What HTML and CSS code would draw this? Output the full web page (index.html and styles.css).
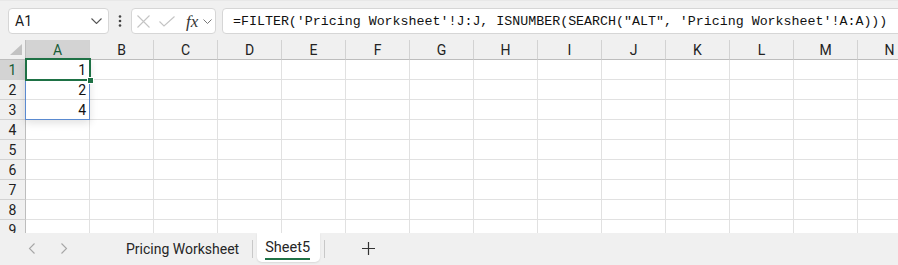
FILE: index.html
```html
<!DOCTYPE html>
<html lang="en">
<head>
  <meta charset="UTF-8">
  <title>Sheet5</title>
  <link rel="stylesheet" href="styles.css">
</head>
<body>

<div class="app">
  <div class="formulaRow">
    <div class="nameBox">
      <span>A1</span>
      <svg class="chev" width="11" height="6" viewBox="0 0 11 6"><path d="M0.5 0.5 L5.5 5.5 L10.5 0.5" fill="none" stroke="#555" stroke-width="1.1"/></svg>
    </div>
    <div class="grip">
      <svg width="4" height="12" viewBox="0 0 4 12"><circle cx="2" cy="1.5" r="1.3" fill="#444"/><circle cx="2" cy="6" r="1.3" fill="#444"/><circle cx="2" cy="10.5" r="1.3" fill="#444"/></svg>
    </div>
    <div class="fxBox">
      <svg class="cancel" width="13" height="13" viewBox="0 0 13 13"><path d="M0.5 0.5 L12.5 12.5 M12.5 0.5 L0.5 12.5" stroke="#c4c4c4" stroke-width="1.1"/></svg>
      <svg class="enter" width="16" height="11" viewBox="0 0 16 11"><path d="M0.5 5.5 L5 10 L15.5 0.5" fill="none" stroke="#c4c4c4" stroke-width="1.1"/></svg>
      <span class="fx">fx</span>
      <svg class="chev" width="9" height="5" viewBox="0 0 9 5"><path d="M0.5 0.5 L4.5 4.5 L8.5 0.5" fill="none" stroke="#777" stroke-width="1"/></svg>
    </div>
    <div class="formula">=FILTER('Pricing Worksheet'!J:J, ISNUMBER(SEARCH("ALT", 'Pricing Worksheet'!A:A)))</div>
  </div>

  <div class="sheet">
    <div id="grid" class="grid"></div>
    <div class="spill"></div>
    <div class="active"><span class="handle"></span></div>
  </div>

  <div class="tabs">
    <div class="nav">
      <svg width="8" height="11" viewBox="0 0 8 11"><path d="M6.5 0.5 L1.5 5.5 L6.5 10.5" fill="none" stroke="#a6a6a6" stroke-width="1.1"/></svg>
      <svg width="8" height="11" viewBox="0 0 8 11"><path d="M1.5 0.5 L6.5 5.5 L1.5 10.5" fill="none" stroke="#a6a6a6" stroke-width="1.1"/></svg>
    </div>
    <div class="tab">Pricing Worksheet</div>
    <span class="sep"></span>
    <div class="tab current"><span>Sheet5</span></div>
    <span class="sep"></span>
    <div class="addSheet">
      <svg width="13" height="13" viewBox="0 0 13 13"><path d="M6.5 0 V13 M0 6.5 H13" stroke="#333" stroke-width="1.2"/></svg>
    </div>
  </div>
</div>

<script>
  var grid = document.getElementById('grid');
  var cols = 'ABCDEFGHIJKLMN'.split('');
  var values = { 1: '1', 2: '2', 3: '4' };

  var corner = document.createElement('div');
  corner.className = 'corner';
  grid.appendChild(corner);

  for (var c = 0; c < cols.length; c++) {
    var head = document.createElement('div');
    head.className = 'colHead' + (c === 0 ? ' sel' : '');
    head.textContent = cols[c];
    grid.appendChild(head);
  }

  for (var r = 1; r <= 9; r++) {
    var rowHead = document.createElement('div');
    rowHead.className = 'rowHead' + (r === 1 ? ' sel' : '');
    rowHead.textContent = r;
    grid.appendChild(rowHead);
    for (var k = 0; k < cols.length; k++) {
      var cell = document.createElement('div');
      cell.className = 'cell';
      if (k === 0 && values[r]) {
        cell.textContent = values[r];
      }
      grid.appendChild(cell);
    }
  }
</script>
</body>
</html>
```

FILE: styles.css
```css
*, *:before, *:after {
  box-sizing: border-box;
}

body {
  margin: 0;
  padding: 0;
  overflow: hidden;
  background: #f0f0f0;
  font-family: Roboto, "Noto Sans", sans-serif;
  color: #222;
}

.app {
  width: 898px;
  height: 265px;
  display: flex;
  flex-direction: column;
  overflow: hidden;
}

/* formula bar */

.formulaRow {
  height: 40px;
  flex: none;
  display: flex;
  align-items: flex-start;
  padding: 7px 0 0 8px;
  background: #f0f0f0;
  border-top: 1px solid #e8e8e8;
}

.nameBox {
  width: 101px;
  height: 26px;
  display: flex;
  align-items: center;
  justify-content: space-between;
  padding: 0 6px 0 6px;
  background: #fff;
  border: 1px solid #d6d6d6;
  border-radius: 4px;
  font-size: 14px;
  color: #1a1a1a;
}

.grip {
  width: 22px;
  height: 26px;
  display: flex;
  align-items: center;
  justify-content: center;
}

.fxBox {
  width: 85px;
  height: 26px;
  display: flex;
  align-items: center;
  padding-left: 5px;
  background: #fff;
  border: 1px solid #d6d6d6;
  border-radius: 4px;
}

.fxBox .enter {
  margin-left: 9px;
}

.fx {
  margin-left: 11px;
  font-family: "Liberation Serif", serif;
  font-style: italic;
  font-size: 17px;
  color: #333;
  line-height: 1;
}

.fxBox .chev {
  margin-left: 5px;
}

.formula {
  flex: 1;
  height: 26px;
  margin: 0 -10px 0 6px;
  padding: 0 0 0 10px;
  display: flex;
  align-items: center;
  background: #fff;
  border: 1px solid #d6d6d6;
  border-radius: 4px;
  font-family: "Liberation Mono", monospace;
  font-size: 13.3px;
  color: #111;
  white-space: nowrap;
}

/* grid */

.sheet {
  position: relative;
  height: 193px;
  flex: none;
  overflow: hidden;
  background: #fff;
}

.grid {
  display: grid;
  grid-template-columns: 26px repeat(14, 64px);
  grid-auto-rows: 20px;
  font-size: 14px;
}

.corner {
  position: relative;
  background: #f0f0f0;
  border-right: 1px solid #bdbdbd;
  border-bottom: 1px solid #bdbdbd;
}

.corner:after {
  content: "";
  position: absolute;
  right: 3px;
  bottom: 4px;
  width: 0;
  height: 0;
  border-left: 12px solid transparent;
  border-bottom: 11px solid #c2c2c2;
}

.colHead {
  display: flex;
  align-items: center;
  justify-content: center;
  background: #f0f0f0;
  border-right: 1px solid #d2d2d2;
  border-bottom: 1px solid #bdbdbd;
  color: #222;
}

.rowHead {
  display: flex;
  align-items: center;
  justify-content: center;
  background: #f0f0f0;
  border-right: 1px solid #bdbdbd;
  border-bottom: 1px solid #d2d2d2;
  color: #222;
}

.colHead.sel, .rowHead.sel {
  background: #d3d3d3;
  color: #185c37;
}

.cell {
  display: flex;
  align-items: center;
  justify-content: flex-end;
  padding-right: 3px;
  border-right: 1px solid #e1e1e1;
  border-bottom: 1px solid #e1e1e1;
  color: #111;
}

.spill {
  position: absolute;
  left: 25px;
  top: 19px;
  width: 65px;
  height: 61px;
  border: 1px solid #5a8ad0;
  box-shadow: 0 3px 8px rgba(0, 0, 0, 0.12);
}

.active {
  position: absolute;
  left: 25px;
  top: 18px;
  width: 66px;
  height: 23px;
  border: 2px solid #1e7145;
}

.handle {
  position: absolute;
  right: -5px;
  bottom: -5px;
  width: 7px;
  height: 7px;
  background: #1e7145;
  border: 1px solid #fff;
}

/* sheet tabs */

.tabs {
  flex: 1;
  display: flex;
  align-items: flex-start;
  background: #f0f0f0;
  font-size: 14px;
  color: #262626;
}

.nav {
  width: 118px;
  display: flex;
  gap: 24px;
  padding: 10px 0 0 28px;
}

.tab {
  height: 29px;
  padding: 2px 13px 0 8px;
  display: flex;
  align-items: center;
  white-space: nowrap;
}

.tab.current {
  margin: 0 4px;
  padding: 2px 10px 0 8px;
  background: #fff;
  border-radius: 0 0 5px 5px;
  box-shadow: 0 1px 2px rgba(0, 0, 0, 0.1);
  font-size: 14.5px;
}

.tab.current span {
  padding-bottom: 2px;
  border-bottom: 2px solid #1e7145;
  margin-top: 2px;
}

.sep {
  width: 1px;
  height: 18px;
  margin-top: 7px;
  background: #c8c8c8;
}

.addSheet {
  padding: 9px 0 0 37px;
}
```
